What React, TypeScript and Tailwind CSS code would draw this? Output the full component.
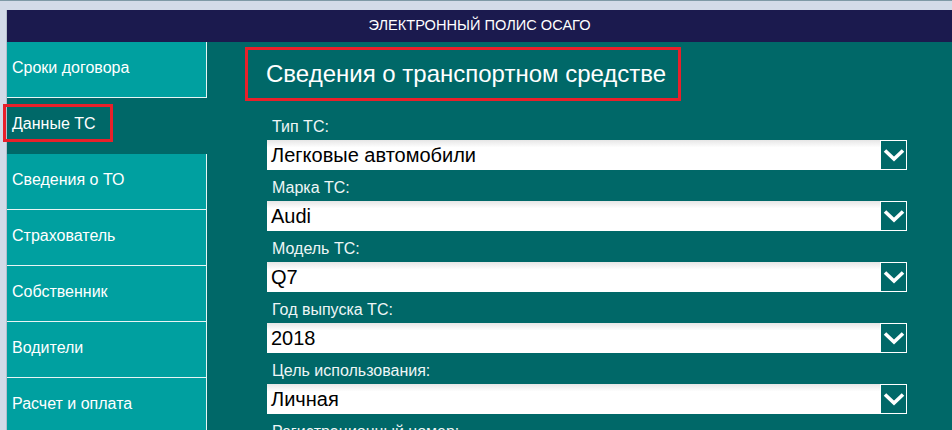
import React from 'react';

const menu = [
  'Сроки договора',
  'Данные ТС',
  'Сведения о ТО',
  'Страхователь',
  'Собственник',
  'Водители',
  'Расчет и оплата',
];

const fields = [
  { label: 'Тип ТС:', value: 'Легковые автомобили' },
  { label: 'Марка ТС:', value: 'Audi' },
  { label: 'Модель ТС:', value: 'Q7' },
  { label: 'Год выпуска ТС:', value: '2018' },
  { label: 'Цель использования:', value: 'Личная' },
];

function Chevron() {
  return (
    <svg width="22" height="14" viewBox="0 0 22 14" fill="none">
      <path d="M2 2.5 L11 11 L20 2.5" stroke="white" strokeWidth="3.6" />
    </svg>
  );
}

function SelectBox({ value }: { value: string }) {
  return (
    <div className="flex h-[30px] w-[640px] bg-gradient-to-b from-[#e6e6e6] via-white via-[25%] to-white">
      <div className="flex-1 flex items-center pl-[4px] text-[20px] text-black leading-none">{value}</div>
      <div className="w-[27px] h-[30px] border border-white bg-[#006868] flex items-center justify-center">
        <Chevron />
      </div>
    </div>
  );
}

export default function App() {
  return (
    <div
      className="w-[952px] h-[430px] overflow-hidden bg-[#d3dbe8] flex flex-col"
      style={{ fontFamily: '"Liberation Sans", Arial, sans-serif' }}
    >
      {/* Window top strip */}
      <div className="h-[10px] shrink-0 border-t border-[#7f9aa6]" />

      <div className="flex-1 flex min-h-0">
        {/* Window left frame */}
        <div className="w-[7px] shrink-0 border-r border-[#b6bfcc]" />

        <div className="flex-1 flex flex-col min-w-0">
          {/* Header */}
          <div className="h-[32px] shrink-0 bg-[#1b1a4e] flex items-center justify-center text-white text-[14.6px]">
            ЭЛЕКТРОННЫЙ ПОЛИС ОСАГО
          </div>

          <div className="flex-1 flex bg-[#006868] min-h-0">
            {/* Sidebar */}
            <div className="w-[200px] shrink-0 flex flex-col">
              {menu.map((m, i) =>
                i === 1 ? (
                  <div key={m} className="relative h-[56px] shrink-0 flex items-center pl-[5px] text-white text-[16px]">
                    <span className="-mt-[4px]">{m}</span>
                    <div className="absolute left-[-4px] top-[6px] w-[110px] h-[38px] border-[3px] border-[#e8202a]" />
                  </div>
                ) : (
                  <div
                    key={m}
                    className="h-[56px] shrink-0 flex items-center pl-[5px] bg-[#00a0a0] border-b border-r border-[#e8f4f4] text-white text-[16px]"
                  >
                    <span className="-mt-[4px]">{m}</span>
                  </div>
                )
              )}
            </div>

            {/* Main */}
            <div className="flex-1 pl-[38px] pt-[5px]">
              <div className="w-[436px] h-[54px] border-[3px] border-[#e8202a] flex items-center pl-[18px] text-white text-[24px]">
                Сведения о транспортном средстве
              </div>

              <div className="pl-[22px] pt-[8px] flex flex-col">
                {fields.map(f => (
                  <div key={f.label} className="flex flex-col">
                    <div className="h-[31px] flex items-end pb-[5px] pl-[5px] text-[16px] text-[#eef6f6] leading-none">
                      {f.label}
                    </div>
                    <SelectBox value={f.value} />
                  </div>
                ))}
                <div className="h-[31px] flex items-end pb-[5px] pl-[5px] text-[16px] text-[#eef6f6] leading-none">
                  Регистрационный номер:
                </div>
              </div>
            </div>
          </div>
        </div>
      </div>
    </div>
  );
}
